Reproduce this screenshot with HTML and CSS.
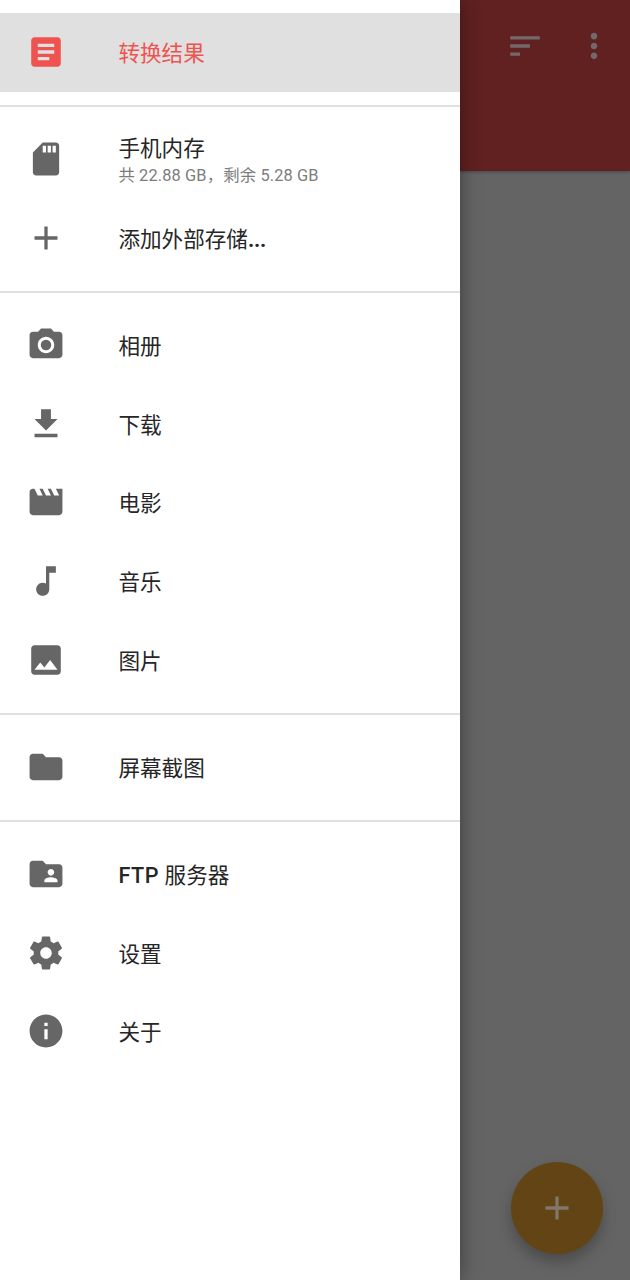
FILE: index.html
```html
<!DOCTYPE html>
<html lang="zh-CN">
<head>
<meta charset="utf-8">
<title>文件管理</title>
<link rel="stylesheet" href="styles.css">
</head>
<body>
<div class="screen">
  <nav class="drawer">
    <section class="group">
      <a class="item item-active">
        <svg class="icon" viewBox="-0.17 -0.17 24.340 24.340"><path d="M19 3H5c-1.100 0-2 .9-2 2v14c0 1.100.9 2 2 2h14c1.100 0 2-.9 2-2V5c0-1.100-.9-2-2-2zm-5 14H7v-2h7v2zm3-4H7v-2h10v2zm0-4H7V7h10v2z"/></svg>
        <span class="label">转换结果</span>
      </a>
    </section>
    <section class="group">
      <a class="item">
        <svg class="icon" viewBox="-0.17 -0.17 24.340 24.340"><path d="M18 2h-8L4.020 8 4 20c0 1.100.9 2 2 2h12c1.100 0 2-.9 2-2V4c0-1.100-.9-2-2-2zm-6 6h-2V4h2v4zm3 0h-2V4h2v4zm3 0h-2V4h2v4z"/></svg>
        <span class="text"><span class="label">手机内存</span><span class="sub">共 22.88 GB，剩余 5.28 GB</span></span>
      </a>
      <a class="item">
        <svg class="icon" viewBox="-0.17 -0.17 24.340 24.340"><path d="M19 13h-6v6h-2v-6H5v-2h6V5h2v6h6v2z"/></svg>
        <span class="label">添加外部存储<span class="dots">...</span></span>
      </a>
    </section>
    <section class="group">
      <a class="item">
        <svg class="icon" viewBox="-0.17 -0.17 24.340 24.340"><circle cx="12" cy="12" r="3.200"/><path d="M9 2L7.170 4H4c-1.100 0-2 .9-2 2v12c0 1.100.9 2 2 2h16c1.100 0 2-.9 2-2V6c0-1.100-.9-2-2-2h-3.170L15 2H9zm3 15c-2.760 0-5-2.240-5-5s2.240-5 5-5 5 2.240 5 5-2.240 5-5 5z"/></svg>
        <span class="label">相册</span>
      </a>
      <a class="item">
        <svg class="icon" viewBox="-0.17 -0.17 24.340 24.340"><path d="M19 9h-4V3H9v6H5l7 7 7-7zM5 18v2h14v-2H5z"/></svg>
        <span class="label">下载</span>
      </a>
      <a class="item">
        <svg class="icon" viewBox="-0.17 -0.17 24.340 24.340"><path d="M18 4l2 4h-3l-2-4h-2l2 4h-3l-2-4H8l2 4H7L5 4H4c-1.100 0-1.990.9-1.990 2L2 18c0 1.100.9 2 2 2h16c1.100 0 2-.9 2-2V4h-4z"/></svg>
        <span class="label">电影</span>
      </a>
      <a class="item">
        <svg class="icon" viewBox="-0.17 -0.17 24.340 24.340"><path d="M12 3v10.550c-.59-.34-1.270-.55-2-.55-2.210 0-4 1.790-4 4s1.790 4 4 4 4-1.790 4-4V7h4V3h-6z"/></svg>
        <span class="label">音乐</span>
      </a>
      <a class="item">
        <svg class="icon" viewBox="-0.17 -0.17 24.340 24.340"><path d="M21 19V5c0-1.100-.9-2-2-2H5c-1.100 0-2 .9-2 2v14c0 1.100.9 2 2 2h14c1.100 0 2-.9 2-2zM8.500 13.500l2.500 3.010L14.500 12l4.500 6H5l3.500-4.500z"/></svg>
        <span class="label">图片</span>
      </a>
    </section>
    <section class="group">
      <a class="item">
        <svg class="icon" viewBox="-0.17 -0.17 24.340 24.340"><path d="M10 4H4c-1.100 0-1.990.9-1.990 2L2 18c0 1.100.9 2 2 2h16c1.100 0 2-.9 2-2V8c0-1.100-.9-2-2-2h-8l-2-2z"/></svg>
        <span class="label">屏幕截图</span>
      </a>
    </section>
    <section class="group">
      <a class="item">
        <svg class="icon" viewBox="-0.17 -0.17 24.340 24.340"><path d="M20 6h-8l-2-2H4c-1.100 0-1.990.9-1.990 2L2 18c0 1.100.9 2 2 2h16c1.100 0 2-.9 2-2V8c0-1.100-.9-2-2-2zm-5 3c1.100 0 2 .9 2 2s-.9 2-2 2-2-.9-2-2 .9-2 2-2zm4 8h-8v-1c0-1.330 2.670-2 4-2s4 .67 4 2v1z"/></svg>
        <span class="label"><span class="latin">FTP</span> 服务器</span>
      </a>
      <a class="item">
        <svg class="icon" viewBox="-0.17 -0.17 24.340 24.340"><path d="M19.430 12.980c.04-.32.07-.64.07-.98s-.03-.66-.07-.98l2.110-1.650c.19-.15.24-.42.12-.64l-2-3.460c-.12-.22-.39-.3-.61-.22l-2.490 1c-.52-.4-1.080-.73-1.690-.98l-.38-2.650C14.460 2.180 14.250 2 14 2h-4c-.25 0-.46.18-.49.42l-.38 2.650c-.61.25-1.170.59-1.690.98l-2.490-1c-.23-.09-.49 0-.61.22l-2 3.460c-.13.22-.07.49.12.64l2.110 1.650c-.04.32-.07.65-.07.98s.03.66.07.98l-2.110 1.650c-.19.15-.24.42-.12.64l2 3.460c.12.22.39.3.61.22l2.490-1c.52.4 1.080.73 1.690.98l.38 2.650c.03.24.24.42.49.42h4c.25 0 .46-.18.49-.42l.38-2.650c.61-.25 1.170-.59 1.690-.98l2.490 1c.23.09.49 0 .61-.22l2-3.460c.12-.22.07-.49-.12-.64l-2.110-1.650zM12 15.500c-1.930 0-3.500-1.570-3.500-3.500s1.570-3.500 3.500-3.500 3.500 1.570 3.500 3.500-1.570 3.500-3.500 3.500z"/></svg>
        <span class="label">设置</span>
      </a>
      <a class="item">
        <svg class="icon" viewBox="-0.17 -0.17 24.340 24.340"><path d="M12 2C6.480 2 2 6.480 2 12s4.480 10 10 10 10-4.480 10-10S17.520 2 12 2zm1 15h-2v-6h2v6zm0-8h-2V7h2v2z"/></svg>
        <span class="label">关于</span>
      </a>
    </section>
  </nav>
  <main class="page">
    <header class="toolbar">
      <svg class="icon" viewBox="-0.17 -0.17 24.340 24.340"><path d="M3 18h6v-2H3v2zM3 6v2h18V6H3zm0 7h12v-2H3v2z"/></svg>
      <svg class="icon" viewBox="-0.17 -0.17 24.340 24.340"><path d="M12 8c1.100 0 2-.9 2-2s-.9-2-2-2-2 .9-2 2 .9 2 2 2zm0 2c-1.100 0-2 .9-2 2s.9 2 2 2 2-.9 2-2-.9-2-2-2zm0 6c-1.100 0-2 .9-2 2s.9 2 2 2 2-.9 2-2-.9-2-2-2z"/></svg>
    </header>
    <button class="fab" aria-label="添加">
      <svg class="icon" viewBox="-0.17 -0.17 24.340 24.340"><path d="M19 13h-6v6h-2v-6H5v-2h6V5h2v6h6v2z"/></svg>
    </button>
  </main>
</div>
</body>
</html>
```
FILE: styles.css
```css
* {
  box-sizing: border-box;
}

body {
  margin: 0;
  font-family: Roboto, "Noto Sans CJK SC", sans-serif;
}

.screen {
  display: flex;
  width: 630px;
  height: 1280px;
  overflow: hidden;
}

.icon {
  flex: none;
  display: block;
  width: 40px;
  height: 40px;
  fill: currentColor;
}

.drawer {
  position: relative;
  z-index: 1;
  width: 460px;
  flex: none;
  background: #fff;
  box-shadow: 0 0 18px rgba(0, 0, 0, 0.4);
}

.drawer .icon {
  margin-bottom: 1px;
}

.group {
  padding: 13.140px 0;
}

.group + .group {
  border-top: 2px solid #e0e0e0;
}

.item {
  display: flex;
  align-items: center;
  gap: 52.400px;
  height: 78.750px;
  padding: 0 26px;
  color: #666;
}

.item-active {
  background: #e0e0e0;
  color: #ef5350;
}

.text {
  display: flex;
  flex-direction: column;
  gap: 3px;
  padding-top: 4px;
}

.label {
  color: #262626;
  font-size: 21.600px;
  line-height: 26px;
  white-space: nowrap;
}

.item > .label {
  padding-top: 3px;
}

.item-active .label {
  color: #ef5350;
}

.dots {
  font-weight: 700;
  letter-spacing: -0.300px;
}

.latin {
  font-weight: 500;
  letter-spacing: 0.600px;
}

.sub {
  color: #7c7c7c;
  font-size: 16.400px;
  letter-spacing: 0.120px;
  line-height: 22px;
  white-space: nowrap;
}

.page {
  flex: 1;
  display: flex;
  flex-direction: column;
  align-items: flex-end;
  justify-content: space-between;
  padding-bottom: 26px;
  background: #646464;
}

.toolbar {
  display: flex;
  justify-content: flex-end;
  align-items: flex-start;
  gap: 29px;
  width: 100%;
  height: 171px;
  padding: 26px 16px 0 0;
  background: #602120;
  color: #74696a;
  box-shadow: 0 1px 3px rgba(0, 0, 0, 0.3);
}

.fab {
  display: flex;
  align-items: center;
  justify-content: center;
  width: 92px;
  height: 92px;
  margin-right: 27px;
  padding: 0;
  border: 0;
  border-radius: 50%;
  background: #634515;
  color: #80766a;
  box-shadow: 0 8px 14px rgba(0, 0, 0, 0.25);
}
```
